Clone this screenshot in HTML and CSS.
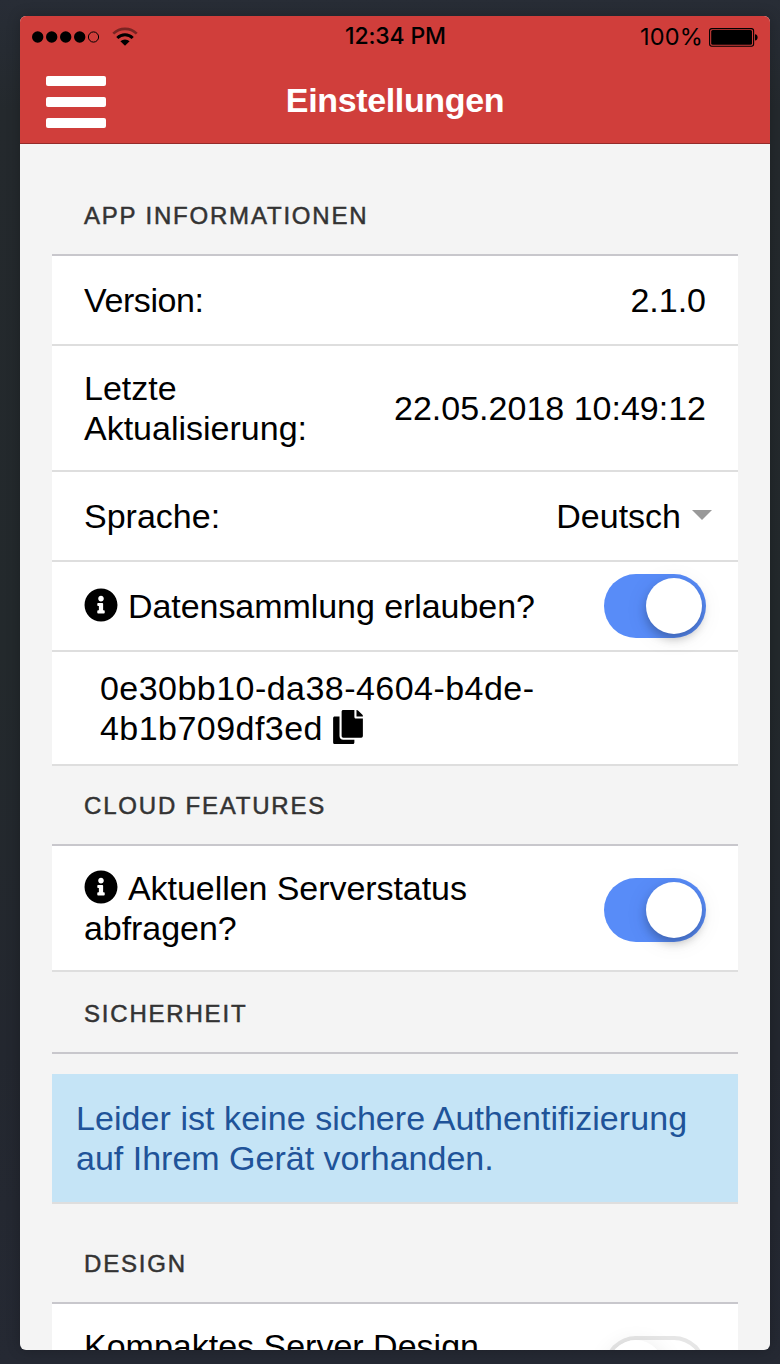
FILE: index.html
```html
<!DOCTYPE html>
<html lang="de">
<head>
<meta charset="utf-8">
<title>Einstellungen</title>
<link rel="stylesheet" href="styles.css">
</head>
<body>
<svg width="0" height="0" class="defs">
  <symbol id="info" viewBox="0 0 512 512"><path d="M256 8C119.043 8 8 119.083 8 256c0 136.997 111.043 248 248 248s248-111.003 248-248C504 119.083 392.957 8 256 8zm0 110c23.196 0 42 18.804 42 42s-18.804 42-42 42-42-18.804-42-42 18.804-42 42-42zm56 254c0 6.627-5.373 12-12 12h-88c-6.627 0-12-5.373-12-12v-24c0-6.627 5.373-12 12-12h12v-64h-12c-6.627 0-12-5.373-12-12v-24c0-6.627 5.373-12 12-12h64c6.627 0 12 5.373 12 12v100h12c6.627 0 12 5.373 12 12v24z"/></symbol>
</svg>
<div class="phone">
  <header class="header">
    <div class="status">
      <div class="status-left">
        <svg class="signal" width="68" height="12" viewBox="0 0 68 12"><circle cx="5.7" cy="6" r="5.7"/><circle cx="19.7" cy="6" r="5.7"/><circle cx="33.7" cy="6" r="5.7"/><circle cx="47.7" cy="6" r="5.7"/><circle cx="61.5" cy="6" r="5.1" fill="none" stroke="#000" stroke-width="1"/></svg>
        <svg class="wifi" width="26" height="19" viewBox="0 0 26 19"><g fill="none" stroke="#000"><path d="M1.3 6.6a16.6 16.6 0 0 1 23.4 0" stroke-width="2.7" opacity=".42"/><path d="M5.3 11a11 11 0 0 1 15.4 0" stroke-width="3"/></g><path d="M8.4 14.2a6.8 6.8 0 0 1 9.2 0L13 18.7z"/></svg>
      </div>
      <div class="clock">12:34 PM</div>
      <div class="status-right">
        <span class="percent">100%</span>
        <svg width="50" height="20" viewBox="0 0 50 20"><rect x=".6" y="1.6" width="44" height="17.6" rx="2.2" fill="none" stroke="#000" stroke-width="1.1"/><rect x="2.2" y="3.1" width="40.8" height="14.6" rx="1.5"/><path d="M46 7.2c3.5 0 3.5 6.2 0 6.2z"/></svg>
      </div>
    </div>
    <div class="toolbar">
      <div class="menu"><i></i><i></i><i></i></div>
      <h1 class="title">Einstellungen</h1>
    </div>
  </header>
  <main class="content">
    <h2 class="section first">APP INFORMATIONEN</h2>
    <div class="row"><span class="t-version">Version:</span><span>2.1.0</span></div>
    <div class="row tall"><span>Letzte<br>Aktualisierung:</span><span>22.05.2018 10:49:12</span></div>
    <div class="row"><span>Sprache:</span><span class="select"><span>Deutsch</span><i class="caret"></i></span></div>
    <div class="row"><span class="t-data"><svg class="info"><use href="#info"/></svg>Datensammlung erlauben?</span><span class="toggle on"><i></i></span></div>
    <div class="row uuid"><span>0e30bb10-da38-4604-b4de-<br>4b1b709df3ed<svg class="copy" viewBox="0 0 448 512"><path d="M320 448v40c0 13.255-10.745 24-24 24H24c-13.255 0-24-10.745-24-24V120c0-13.255 10.745-24 24-24h72v296c0 30.879 25.121 56 56 56h168zm0-344V0H152c-13.255 0-24 10.745-24 24v368c0 13.255 10.745 24 24 24h272c13.255 0 24-10.745 24-24V128H344c-13.2 0-24-10.8-24-24zm120.971-31.029L375.029 7.029A24 24 0 0 0 358.059 0H352v96h96v-6.059a24 24 0 0 0-7.029-16.97z"/></svg></span></div>
    <h2 class="section cloud">CLOUD FEATURES</h2>
    <div class="row tall toggle-row"><span class="t-data"><svg class="info"><use href="#info"/></svg>Aktuellen Serverstatus<br>abfragen?</span><span class="toggle on"><i></i></span></div>
    <h2 class="section security">SICHERHEIT</h2>
    <div class="alert"><span class="alert-line">Leider ist keine sichere Authentifizierung</span><br>auf Ihrem Gerät vorhanden.</div>
    <h2 class="section design">DESIGN</h2>
    <div class="row tall toggle-row"><span>Kompaktes Server Design</span><span class="toggle"><i></i></span></div>
  </main>
</div>
</body>
</html>
```
FILE: styles.css
```css
* { box-sizing: border-box; }
body {
  margin: 0;
  height: 1364px;
  overflow: hidden;
  padding: 16px 10px 14px 20px;
  background: linear-gradient(#282d36 0, #262b32 50px, #24292d 110px, #23292c 650px, #23272f 1050px, #252933 1364px);
  font-family: "Liberation Sans", Arial, sans-serif;
  color: #000;
}
.defs { position: absolute; }
.phone {
  height: 1334px;
  overflow: hidden;
  border-radius: 6px;
  background: #f4f4f4;
  box-shadow: 0 0 14px rgba(0, 0, 0, .22);
}
.header {
  height: 128px;
  background: #d03e3b;
  border-bottom: 1px solid #942b2a;
}
.status {
  height: 41px;
  display: grid;
  grid-template-columns: 1fr auto 1fr;
  align-items: center;
  padding: 0 11px 0 12px;
  font-family: Inter, sans-serif;
  font-size: 23.5px;
}
.status-left, .status-right { display: flex; align-items: center; }
.status-left { gap: 12px; }
.wifi { margin-bottom: 1px; }
.status-right { justify-content: flex-end; gap: 6px; }
.percent { letter-spacing: .2px; }
.clock {
  padding-bottom: 2px;
  font-size: 23px;
  font-weight: 500;
  letter-spacing: -.15px;
  white-space: nowrap;
}
.toolbar {
  height: 86px;
  display: grid;
  grid-template-columns: 86px 1fr 86px;
  align-items: center;
}
.menu { display: grid; gap: 11.4px; padding: 4px 0 0 26px; }
.menu i { height: 10px; border-radius: 2px; background: #fff; }
.title {
  margin: 0;
  padding-bottom: 1px;
  font-size: 34px;
  line-height: 40px;
  letter-spacing: -.35px;
  text-align: center;
  color: #fff;
}
.content { padding: 0 32px; }
.section {
  margin: 0;
  padding-left: 32px;
  border-bottom: 2px solid #c8c7cc;
  font-size: 24px;
  line-height: 80px;
  font-weight: 400;
  letter-spacing: 1.8px;
  color: #333;
  -webkit-text-stroke: .5px #333;
}
.first { padding-top: 32px; height: 112px; }
.cloud { height: 80px; }
.security { height: 82px; line-height: 83px; }
.design { height: 100px; line-height: 120px; }
.row {
  height: 90px;
  padding: 0 32px;
  display: flex;
  align-items: center;
  justify-content: space-between;
  background: #fff;
  border-bottom: 2px solid #dedede;
  font-size: 34px;
  line-height: 40px;
  white-space: nowrap;
}
.tall { height: 126px; }
.toggle-row { align-items: flex-start; padding-top: 22px; }
.toggle-row .toggle { margin-top: 10px; }
.uuid { height: 114px; padding-left: 48px; letter-spacing: .46px; }
.t-version { letter-spacing: -.4px; }
.t-data { letter-spacing: -.06px; }
.select { display: flex; align-items: center; gap: 11px; margin-right: -6px; }
.caret {
  margin-bottom: 2px;
  border: 10px solid transparent;
  border-top-color: #999;
  border-bottom: 0;
}
.info { width: 34px; height: 34px; margin-right: 10px; vertical-align: -4px; }
.copy { width: 30px; height: 34px; margin-left: 10px; vertical-align: -4px; }
.toggle {
  width: 102px;
  height: 64px;
  padding: 4px;
  border-radius: 32px;
  background: #fff;
  box-shadow: inset 0 0 0 4px #e6e6e6;
}
.toggle i {
  display: block;
  width: 56px;
  height: 56px;
  border-radius: 50%;
  background: #fff;
  box-shadow: 0 6px 24px rgba(0, 0, 0, .12), 0 6px 6px rgba(0, 0, 0, .08);
}
.on { background: #588cf8; box-shadow: none; }
.on i { margin-left: 38px; box-shadow: 0 5px 10px rgba(0, 0, 0, .24), 0 4px 24px rgba(0, 0, 0, .08); }
.alert {
  height: 130px;
  margin-top: 20px;
  padding: 24px;
  background: #c5e4f6;
  border-bottom: 2px solid #dedede;
  color: #205399;
  font-size: 34px;
  line-height: 40px;
  white-space: nowrap;
}
.alert-line { letter-spacing: .06px; }
```
